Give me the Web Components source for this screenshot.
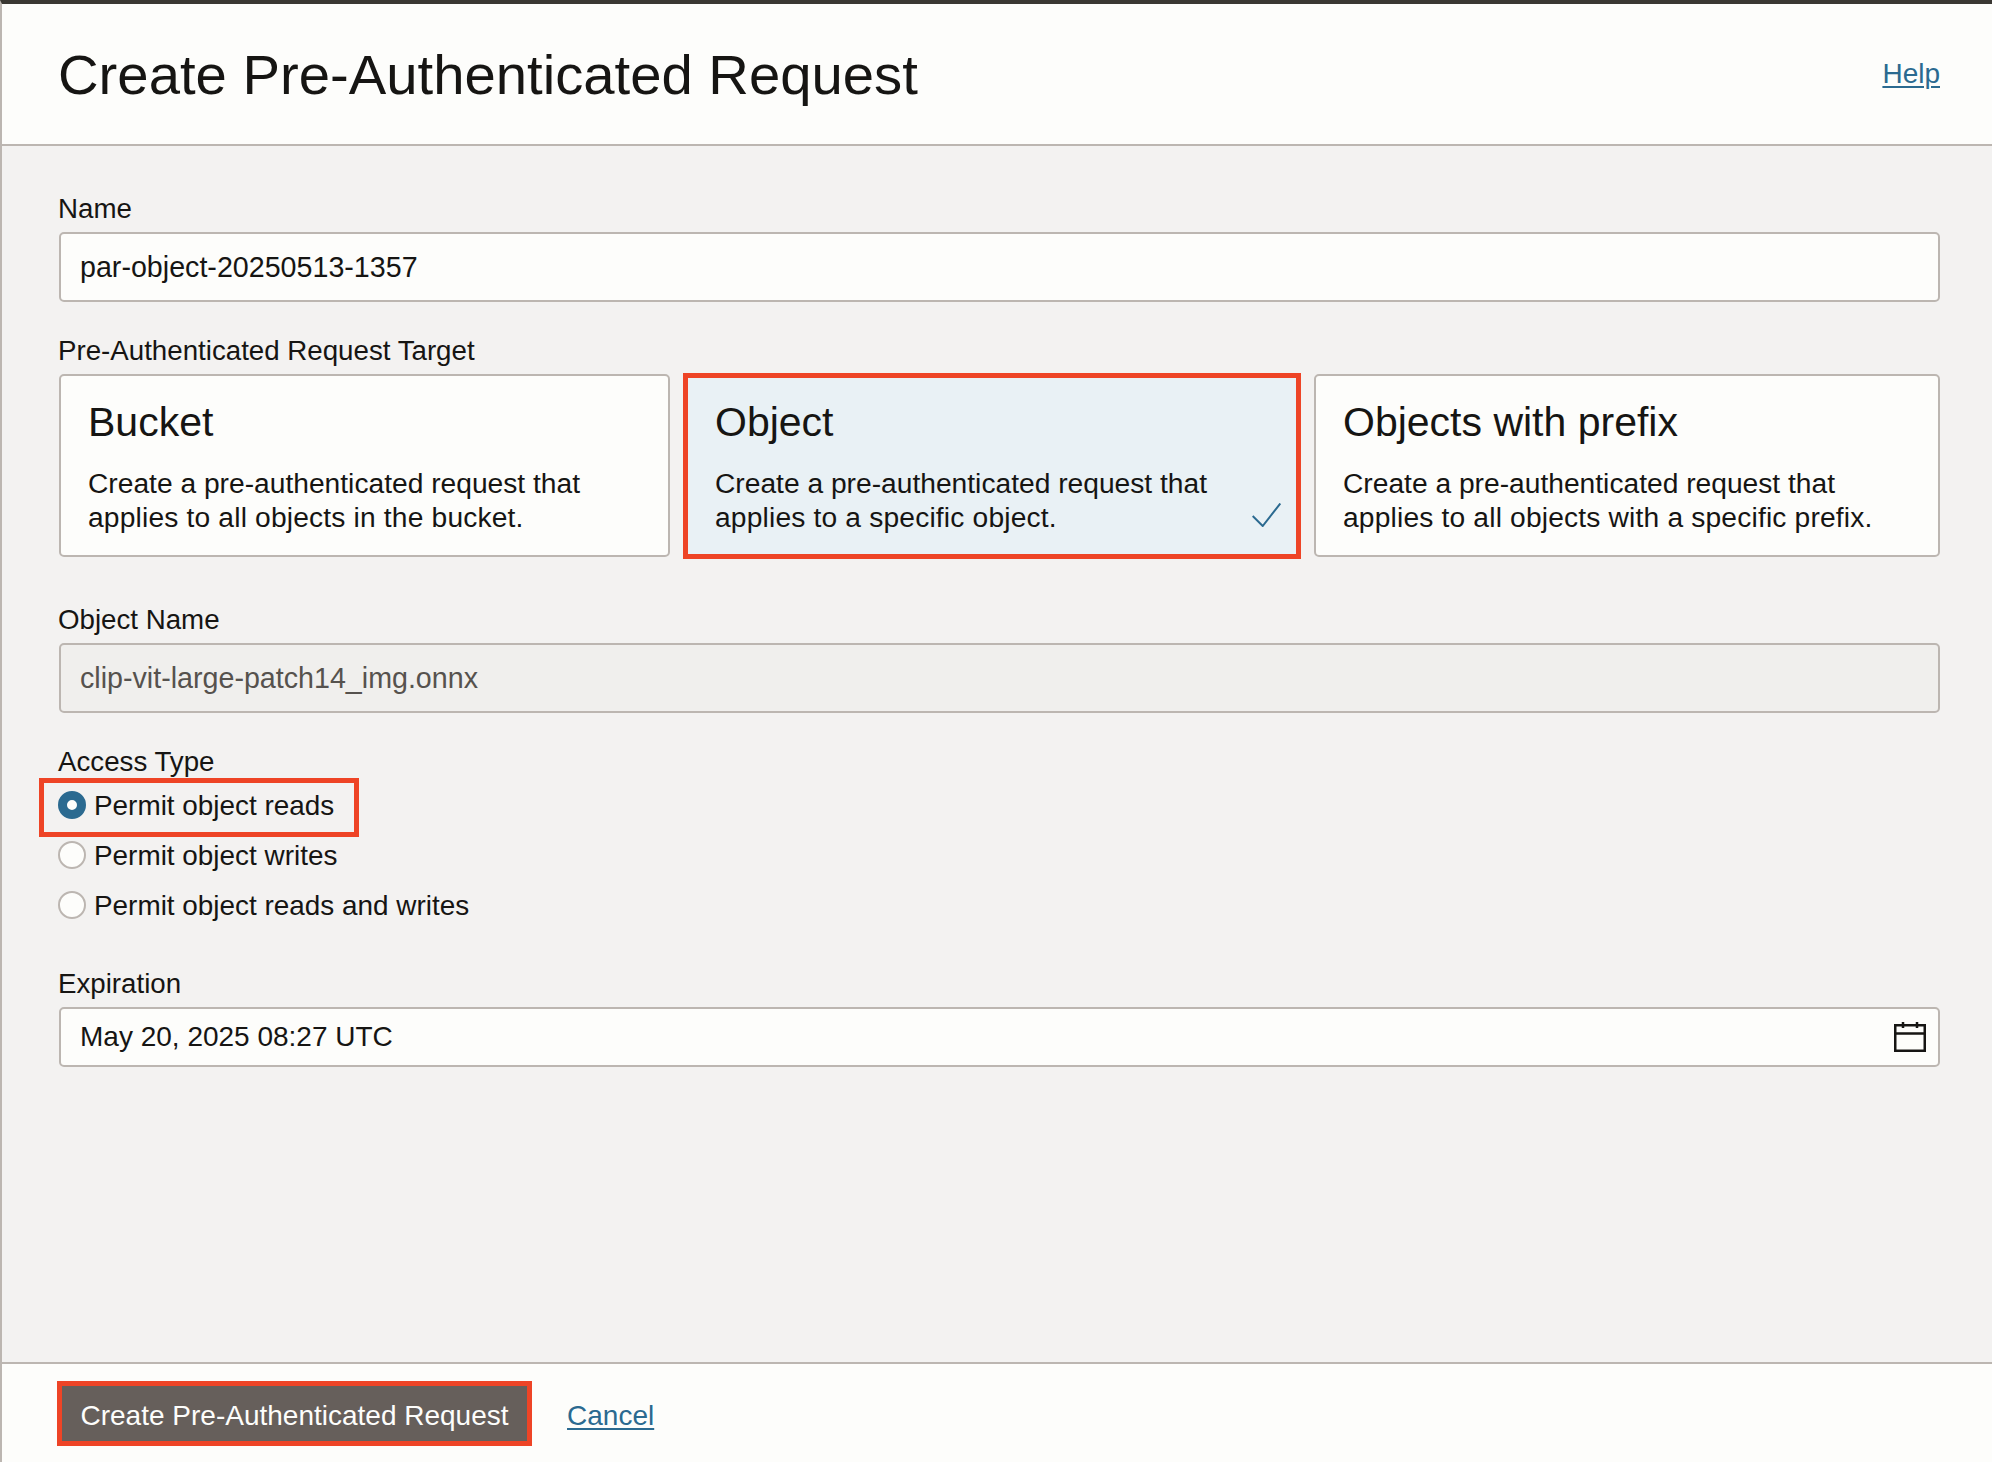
<!DOCTYPE html>
<html lang="en">
<head>
<meta charset="utf-8">
<title>Create Pre-Authenticated Request</title>
<style>
    html, body { margin: 0; padding: 0; }
    body {
        font-family: "Liberation Sans", Arial, sans-serif;
        color: #161513;
        background: #f3f2f1;
    }
</style>
</head>
<body>
<par-dialog>
    <par-header slot="header" help="Help">Create Pre-Authenticated Request</par-header>

    <par-field label="Name" value="par-object-20250513-1357" style="margin-bottom:32px"></par-field>

    <par-group label="Pre-Authenticated Request Target" style="margin-bottom:45px">
        <par-target-row>
            <par-target-card heading="Bucket">Create a pre-authenticated request that<br><span>applies to all objects in the bucket.</span></par-target-card>
            <par-target-card heading="Object" selected>Create a pre-authenticated request that<br><span>applies to a specific object.</span></par-target-card>
            <par-target-card heading="Objects with prefix">Create a pre-authenticated request that<br><span>applies to all objects with a specific prefix.</span></par-target-card>
        </par-target-row>
    </par-group>

    <par-field label="Object Name" value="clip-vit-large-patch14_img.onnx" disabled style="margin-bottom:32px"></par-field>

    <par-group label="Access Type" style="margin-bottom:36px" tight>
        <par-radio checked marked>Permit object reads</par-radio>
        <par-radio>Permit object writes</par-radio>
        <par-radio>Permit object reads and writes</par-radio>
    </par-group>

    <par-field label="Expiration" value="May 20, 2025 08:27 UTC" calendar></par-field>

    <par-footer slot="footer">
        <par-button marked>Create Pre-Authenticated Request</par-button>
        <par-link style="margin-top:5px">Cancel</par-link>
    </par-footer>
</par-dialog>

<script>
class ParDialog extends HTMLElement {
    constructor() {
        super();
        this.attachShadow({ mode: 'open' });
        this.shadowRoot.innerHTML = `
            <style>
                :host {
                    display: flex;
                    flex-direction: column;
                    box-sizing: border-box;
                    width: 1992px;
                    height: 1462px;
                    border-top: 4px solid #3a3833;
                    border-left: 2px solid #bcb6b1;
                    overflow: hidden;
                }
                main {
                    flex: 1;
                    padding: 45px 52px 0 57px;
                }
            </style>
            <slot name="header"></slot>
            <main><slot></slot></main>
            <slot name="footer"></slot>
        `;
    }
}

class ParLink extends HTMLElement {
    constructor() {
        super();
        this.attachShadow({ mode: 'open' });
        this.shadowRoot.innerHTML = `
            <style>
                :host {
                    display: inline-block;
                    color: #2b6a90;
                    font-size: 28px;
                    line-height: 34px;
                    text-decoration: underline;
                    text-decoration-thickness: 2px;
                    text-underline-offset: 3px;
                }
            </style>
            <slot></slot>
        `;
    }
}

class ParHeader extends HTMLElement {
    constructor() {
        super();
        this.attachShadow({ mode: 'open' });
        this.shadowRoot.innerHTML = `
            <style>
                :host {
                    display: flex;
                    align-items: center;
                    justify-content: space-between;
                    box-sizing: border-box;
                    height: 142px;
                    padding: 0 52px 0 56px;
                    background: #fdfdfb;
                    border-bottom: 2px solid #bcb6b1;
                }
                h1 {
                    margin: 0;
                    padding-top: 1px;
                    font-size: 56.25px;
                    font-weight: 400;
                    line-height: 64px;
                }
            </style>
            <h1><slot></slot></h1>
            <par-link>${this.getAttribute('help') || ''}</par-link>
        `;
    }
}

class ParField extends HTMLElement {
    constructor() {
        super();
        this.attachShadow({ mode: 'open' });
        const disabled = this.hasAttribute('disabled');
        const calendar = this.hasAttribute('calendar');
        this.shadowRoot.innerHTML = `
            <style>
                :host { display: block; }
                label {
                    display: block;
                    margin: 0 0 6px -1px;
                    padding-top: 1px;
                    font-size: 27.7px;
                    line-height: 34px;
                }
                .box {
                    display: flex;
                    align-items: center;
                    justify-content: space-between;
                    box-sizing: border-box;
                    height: ${calendar ? 60 : 70}px;
                    padding: 0 12px 0 19px;
                    border: 2px solid #bcb6b1;
                    border-radius: 5px;
                    background: ${disabled ? '#f0efed' : '#fdfdfb'};
                    color: ${disabled ? '#56524e' : '#161513'};
                    font-size: ${calendar ? 28 : 28.65}px;
                }
                svg { display: block; }
            </style>
            <label>${this.getAttribute('label')}</label>
            <div class="box">
                <span>${this.getAttribute('value')}</span>
                ${calendar ? `
                <svg width="32" height="30" viewBox="0 0 32 30" fill="none" stroke="#161513" stroke-width="2.5">
                    <rect x="1.25" y="3.25" width="29.5" height="25.5"/>
                    <path d="M1 11.5h30M9 0v6M23 0v6"/>
                </svg>` : ''}
            </div>
        `;
    }
}

class ParGroup extends HTMLElement {
    constructor() {
        super();
        this.attachShadow({ mode: 'open' });
        this.shadowRoot.innerHTML = `
            <style>
                :host { display: block; }
                .label {
                    margin: 0 0 ${this.hasAttribute('tight') ? 1 : 6}px -1px;
                    font-size: 27.7px;
                    line-height: 34px;
                }
            </style>
            <div class="label">${this.getAttribute('label')}</div>
            <slot></slot>
        `;
    }
}

class ParTargetRow extends HTMLElement {
    constructor() {
        super();
        this.attachShadow({ mode: 'open' });
        this.shadowRoot.innerHTML = `
            <style>
                :host {
                    display: grid;
                    grid-template-columns: 611px 618px 1fr;
                    column-gap: 13px;
                }
            </style>
            <slot></slot>
        `;
    }
}

class ParTargetCard extends HTMLElement {
    constructor() {
        super();
        this.attachShadow({ mode: 'open' });
        this.shadowRoot.innerHTML = `
            <style>
                :host {
                    display: block;
                    position: relative;
                    box-sizing: border-box;
                    height: 183px;
                    padding: 23px 28px 0 27px;
                    border: 2px solid #bcb6b1;
                    border-radius: 5px;
                    background: #fdfdfb;
                }
                :host([selected]) {
                    background: #e9f1f5;
                    border: 5px solid #ee4426;
                    border-radius: 0;
                    margin: -1px 0 -2px;
                    height: 186px;
                    padding: 21px 25px 0 27px;
                }
                h2 {
                    margin: 0 0 21px;
                    font-size: 41px;
                    font-weight: 400;
                    line-height: 46px;
                }
                p {
                    margin: 0;
                    font-size: 28.2px;
                    line-height: 34px;
                }
                ::slotted(span) {
                    letter-spacing: .17px;
                }
                svg {
                    position: absolute;
                    right: 15px;
                    bottom: 27px;
                }
            </style>
            <h2>${this.getAttribute('heading')}</h2>
            <p><slot></slot></p>
            ${this.hasAttribute('selected') ? `
            <svg width="29" height="24" viewBox="0 0 29 24" fill="none" stroke="#2b6a90" stroke-width="2">
                <path d="M.7 13l10 10L28.3.5"/>
            </svg>` : ''}
        `;
    }
}

class ParRadio extends HTMLElement {
    constructor() {
        super();
        this.attachShadow({ mode: 'open' });
        this.shadowRoot.innerHTML = `
            <style>
                :host {
                    display: flex;
                    align-items: center;
                    position: relative;
                    gap: 8px;
                    height: 50px;
                    margin-left: -1px;
                    font-size: 27.9px;
                }
                .dot {
                    box-sizing: border-box;
                    width: 28px;
                    height: 28px;
                    border: 2px solid #bcb6b1;
                    border-radius: 50%;
                    background: #fdfdfb;
                }
                .text { padding-top: 2px; }
                :host([checked]) .dot {
                    border: 9px solid #2b6a90;
                }
                :host([marked])::after {
                    content: '';
                    position: absolute;
                    left: -19px;
                    top: -2px;
                    width: 310px;
                    height: 49px;
                    border: 5px solid #ee4426;
                }
            </style>
            <span class="dot"></span>
            <span class="text"><slot></slot></span>
        `;
    }
}

class ParButton extends HTMLElement {
    constructor() {
        super();
        this.attachShadow({ mode: 'open' });
        this.shadowRoot.innerHTML = `
            <style>
                :host {
                    display: inline-flex;
                    align-items: center;
                    justify-content: center;
                    box-sizing: border-box;
                    height: 55px;
                    padding: 5px 18.5px 0;
                    background: #665f5b;
                    color: #fdfdfb;
                    font-size: 28px;
                }
                :host([marked]) {
                    outline: 5px solid #ee4426;
                }
            </style>
            <slot></slot>
        `;
    }
}

class ParFooter extends HTMLElement {
    constructor() {
        super();
        this.attachShadow({ mode: 'open' });
        this.shadowRoot.innerHTML = `
            <style>
                :host {
                    display: flex;
                    align-items: center;
                    gap: 40px;
                    box-sizing: border-box;
                    height: 100px;
                    padding: 0 0 0 60px;
                    background: #fdfdfb;
                    border-top: 2px solid #bcb6b1;
                }
            </style>
            <slot></slot>
        `;
    }
}

customElements.define('par-link', ParLink);
customElements.define('par-header', ParHeader);
customElements.define('par-field', ParField);
customElements.define('par-group', ParGroup);
customElements.define('par-target-row', ParTargetRow);
customElements.define('par-target-card', ParTargetCard);
customElements.define('par-radio', ParRadio);
customElements.define('par-button', ParButton);
customElements.define('par-footer', ParFooter);
customElements.define('par-dialog', ParDialog);
</script>
</body>
</html>
